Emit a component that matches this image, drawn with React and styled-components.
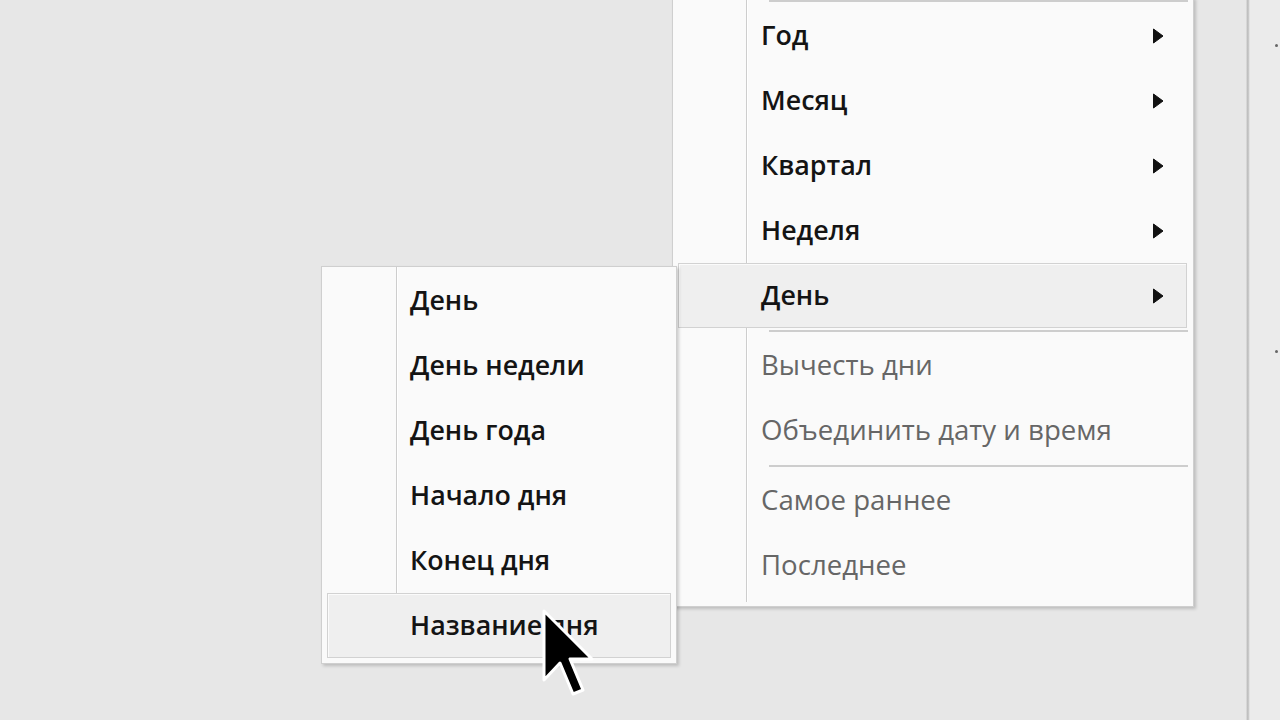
import React from "react";
import styled, { createGlobalStyle } from "styled-components";

const Global = createGlobalStyle`
  html, body { margin: 0; padding: 0; background: #e8e8e8; }
  * { box-sizing: border-box; }
`;

const Page = styled.div`
  width: 1280px;
  height: 720px;
  display: flex;
  overflow: hidden;
  background: #e8e8e8;
  font-family: "Open Sans", "Noto Sans", sans-serif;
`;

const Workspace = styled.div`
  position: relative;
  flex: 1;
  background: #e7e7e7;
`;

const Divider = styled.div`
  width: 4px;
  background: linear-gradient(to right, #e2e2e2, #bdbdbd 40%, #c6c6c6 60%, #ededed);
`;

const SidePanel = styled.div`
  width: 30px;
  background: #ebebeb;
  display: flex;
  flex-direction: column;
  align-items: flex-end;
  padding: 44px 2px 0 0;
  gap: 303px;
`;

const Dot = styled.span`
  width: 3px;
  height: 3px;
  border-radius: 50%;
  background: #666;
`;

const Menu = styled.div`
  position: absolute;
  left: ${(p) => p.$left}px;
  top: ${(p) => p.$top}px;
  width: ${(p) => p.$width}px;
  background: #fafafa;
  border: 1px solid #cfcfcf;
  box-shadow: 2px 2px 3px rgba(0, 0, 0, 0.18);
  padding: ${(p) => p.$pad};
  display: flex;
  flex-direction: column;
  z-index: ${(p) => p.$z};

  &::before {
    content: "";
    position: absolute;
    left: ${(p) => p.$gutter}px;
    top: 0;
    bottom: ${(p) => p.$gutterBottom}px;
    width: 1px;
    background: #cdcdcd;
    box-shadow: 1px 0 0 #ffffff;
    z-index: 0;
  }
`;

const Item = styled.div`
  position: relative;
  z-index: 1;
  height: 65px;
  margin: 0 ${(p) => p.$mr}px 0 5px;
  padding: 0 22px 3px ${(p) => p.$pl}px;
  display: flex;
  align-items: center;
  justify-content: space-between;
  border: 1px solid ${(p) => (p.$active ? "#d2d2d2" : "transparent")};
  background: ${(p) => (p.$active ? "#efefef" : "transparent")};
  box-shadow: ${(p) => (p.$active ? "inset 1px 1px 0 #fbfbfb" : "none")};
  font-size: ${(p) => (p.$disabled ? "27.6px" : "26.8px")};
  font-weight: ${(p) => (p.$disabled ? 400 : 600)};
  color: ${(p) => (p.$disabled ? "#666666" : "#141414")};
  white-space: nowrap;
`;

const Separator = styled.div`
  position: relative;
  z-index: 1;
  height: 5px;
  display: flex;
  align-items: center;
  padding: 0 5px 0 96px;

  &::after {
    content: "";
    flex: 1;
    height: 2px;
    background: #cdcdcd;
  }
`;

const Arrow = styled.svg`
  width: 12px;
  height: 16px;
  flex: none;
  margin-top: 3px;
`;

const SubArrow = () => (
  <Arrow viewBox="0 0 12 16">
    <path d="M1.5 1 L11 8 L1.5 15 Z" fill="#111" stroke="#111" strokeWidth="1" strokeLinejoin="round" />
  </Arrow>
);

const Cursor = styled.svg`
  position: absolute;
  left: 541px;
  top: 608px;
  width: 56px;
  height: 96px;
  z-index: 5;
`;

const mainItems = [
  { t: "Год", sub: true },
  { t: "Месяц", sub: true },
  { t: "Квартал", sub: true },
  { t: "Неделя", sub: true },
  { t: "День", sub: true, active: true },
  { sep: true },
  { t: "Вычесть дни", disabled: true },
  { t: "Объединить дату и время", disabled: true },
  { sep: true },
  { t: "Самое раннее", disabled: true },
  { t: "Последнее", disabled: true },
];

const subItems = [
  { t: "День" },
  { t: "День недели" },
  { t: "День года" },
  { t: "Начало дня" },
  { t: "Конец дня" },
  { t: "Название дня", active: true },
];

export default function App() {
  return (
    <>
      <Global />
      <Page>
        <Workspace>
          <Menu $left={672} $top={-3} $width={522} $pad="0 0 8px 0" $gutter={73} $gutterBottom={4} $z={1}>
            <Separator />
            {mainItems.map((it, i) =>
              it.sep ? (
                <Separator key={i} />
              ) : (
                <Item key={i} $pl={82} $mr={6} $active={it.active} $disabled={it.disabled}>
                  <span>{it.t}</span>
                  {it.sub && <SubArrow />}
                </Item>
              )
            )}
          </Menu>
          <Menu $left={321} $top={266} $width={356} $pad="1px 0 5px 0" $gutter={74} $gutterBottom={70} $z={2}>
            {subItems.map((it, i) => (
              <Item key={i} $pl={82} $mr={5} $active={it.active}>
                <span>{it.t}</span>
              </Item>
            ))}
          </Menu>
          <Cursor viewBox="0 0 56 96">
            <path
              d="M3 3 L3 72 L19 55 L32 86 L42 82 L29 51 L51 51 Z"
              fill="#000"
              stroke="#fff"
              strokeWidth="3"
              strokeLinejoin="round"
            />
          </Cursor>
        </Workspace>
        <Divider />
        <SidePanel>
          <Dot />
          <Dot />
        </SidePanel>
      </Page>
    </>
  );
}
